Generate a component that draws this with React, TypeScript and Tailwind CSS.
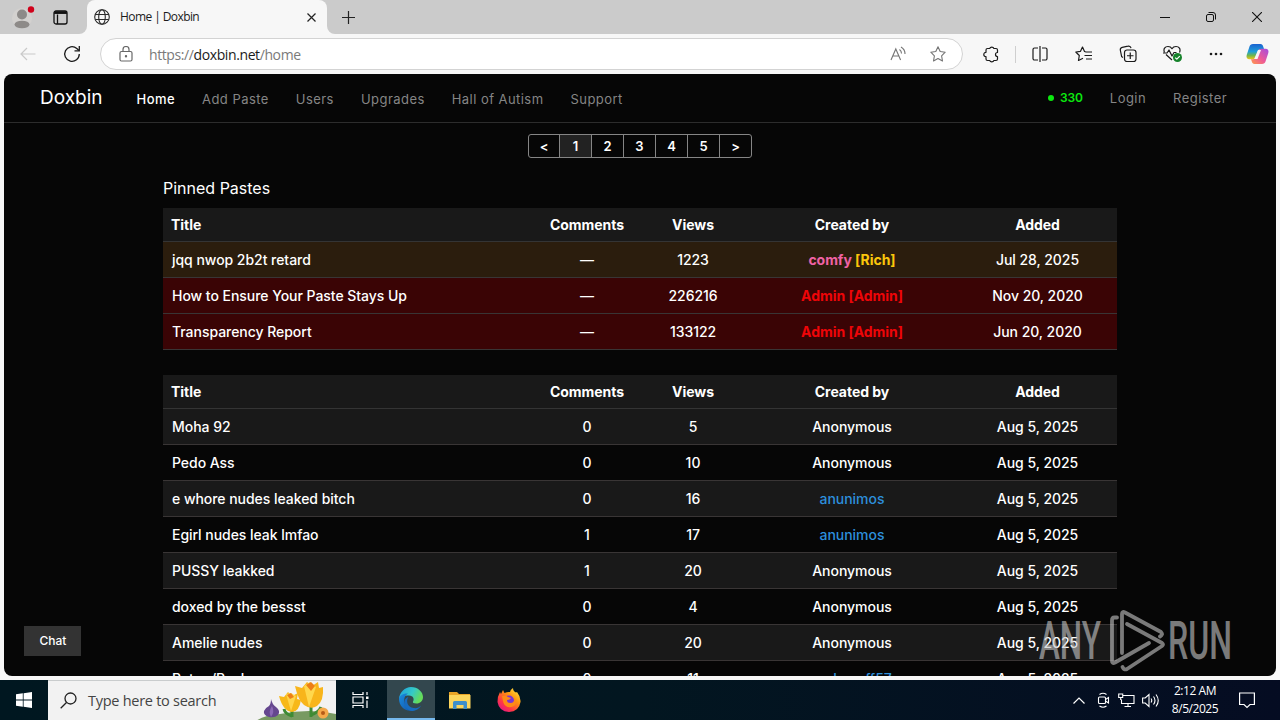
import { ReactNode } from 'react';

interface Paste {
    title: string;
    comments: string;
    views: string;
    author: ReactNode;
    added: string;
    tone: string;
}

const DARK = 'bg-[#060606]';
const LIGHT = 'bg-[#191919]';

const Admin = () => <b className="font-bold text-[#ee0508]">Admin [Admin]</b>;
const Member = ({ name }: { name: string }) => <span className="text-[#2d8fdc]">{name}</span>;

const PINNED: Paste[] = [
    {
        title: 'jqq nwop 2b2t retard',
        comments: '—',
        views: '1223',
        author: (
            <b className="font-bold">
                <span className="text-[#f062a4]">comfy</span> <span className="text-[#fbc60b]">[Rich]</span>
            </b>
        ),
        added: 'Jul 28, 2025',
        tone: 'bg-[#2b1d0d]',
    },
    { title: 'How to Ensure Your Paste Stays Up', comments: '—', views: '226216', author: <Admin />, added: 'Nov 20, 2020', tone: 'bg-[#3a0405]' },
    { title: 'Transparency Report', comments: '—', views: '133122', author: <Admin />, added: 'Jun 20, 2020', tone: 'bg-[#3a0405]' },
];

const PASTES: Paste[] = [
    { title: 'Moha 92', comments: '0', views: '5', author: 'Anonymous', added: 'Aug 5, 2025', tone: LIGHT },
    { title: 'Pedo Ass', comments: '0', views: '10', author: 'Anonymous', added: 'Aug 5, 2025', tone: DARK },
    { title: 'e whore nudes leaked bitch', comments: '0', views: '16', author: <Member name="anunimos" />, added: 'Aug 5, 2025', tone: LIGHT },
    { title: 'Egirl nudes leak lmfao', comments: '1', views: '17', author: <Member name="anunimos" />, added: 'Aug 5, 2025', tone: DARK },
    { title: 'PUSSY leakked', comments: '1', views: '20', author: 'Anonymous', added: 'Aug 5, 2025', tone: LIGHT },
    { title: 'doxed by the bessst', comments: '0', views: '4', author: 'Anonymous', added: 'Aug 5, 2025', tone: DARK },
    { title: 'Amelie nudes', comments: '0', views: '20', author: 'Anonymous', added: 'Aug 5, 2025', tone: LIGHT },
    { title: 'Peter /Pack', comments: '0', views: '11', author: <Member name="sarkseoff57" />, added: 'Aug 5, 2025', tone: DARK },
];

const NAV = ['Add Paste', 'Users', 'Upgrades', 'Hall of Autism', 'Support'];
const PAGES = ['<', '1', '2', '3', '4', '5', '>'];

function PasteTable({ rows }: { rows: Paste[] }) {
    return (
        <table className="w-[954px] table-fixed border-separate border-spacing-0 text-center text-[14px] font-medium tracking-[-0.040px] text-white">
            <colgroup>
                <col className="w-[371px]" />
                <col className="w-[106px]" />
                <col className="w-[106px]" />
                <col className="w-[212px]" />
                <col className="w-[159px]" />
            </colgroup>
            <thead>
                <tr className="h-[34px] bg-[#191919] font-bold *:border-b *:border-[#343434]">
                    <th className="px-2 text-left">Title</th>
                    <th>Comments</th>
                    <th>Views</th>
                    <th>Created by</th>
                    <th>Added</th>
                </tr>
            </thead>
            <tbody>
                {rows.map((row) => (
                    <tr key={row.title} className={`h-9 *:border-b *:border-[#393535] ${row.tone}`}>
                        <td className="pl-[9px] text-left">{row.title}</td>
                        <td>{row.comments}</td>
                        <td>{row.views}</td>
                        <td>{row.author}</td>
                        <td>{row.added}</td>
                    </tr>
                ))}
            </tbody>
        </table>
    );
}

function TabBar() {
    return (
        <div className="flex h-[34px] bg-[#f7f7f7]">
            <div className="flex w-[87px] items-center rounded-br-lg bg-[#cbcbcb] pl-3">
                <svg width="24" height="26" viewBox="0 0 24 26">
                    <circle cx="10" cy="14" r="10" fill="#d3d1cf" />
                    <circle cx="10" cy="10.500" r="5" fill="#8d8a88" />
                    <ellipse cx="10" cy="20.500" rx="7.500" ry="3.800" fill="#8d8a88" />
                    <circle cx="19" cy="5.500" r="3.200" fill="#d0021b" />
                </svg>
                <svg className="ml-[17px]" width="15" height="15" viewBox="0 0 15 15" fill="none" stroke="#111" strokeWidth="1.300">
                    <rect x="1" y="1" width="13" height="13" rx="2" />
                    <path d="M1 3.200h13M4.500 4.500V14" />
                    <path d="M1.500 2.500h12" strokeWidth="2.500" />
                </svg>
            </div>
            <div className="w-[240px] bg-[#cbcbcb]">
                <div className="flex h-full items-center rounded-t-lg bg-[#f7f7f7] pl-[7px]">
                    <svg width="16" height="16" viewBox="0 0 16 16" fill="none" stroke="#2b2b2b" strokeWidth="1.100">
                        <circle cx="8" cy="8" r="7.300" />
                        <ellipse cx="8" cy="8" rx="3.300" ry="7.300" />
                        <path d="M1.300 5.500h13.400M1.300 10.500h13.400" />
                    </svg>
                    <span className="ml-[10px] w-[187px] text-[12px] tracking-[-0.580px] text-[#1b1b1b]">Home | Doxbin</span>
                    <svg width="9" height="9" viewBox="0 0 9 9" stroke="#222" strokeWidth="1.200">
                        <path d="M.5.5l8 8M8.500.5l-8 8" />
                    </svg>
                </div>
            </div>
            <div className="flex flex-1 items-center justify-between rounded-bl-lg bg-[#cbcbcb] pr-[18px] pl-[14px]">
                <svg width="15" height="15" viewBox="0 0 15 15" stroke="#222" strokeWidth="1.200">
                    <path d="M7.500 1v13M1 7.500h13" />
                </svg>
                <div className="flex items-center gap-[36px]">
                    <svg width="10" height="10" viewBox="0 0 10 10" stroke="#111">
                        <path d="M0 5.500h10" />
                    </svg>
                    <svg width="10" height="10" viewBox="0 0 10 10" fill="none" stroke="#111">
                        <rect x=".5" y="2.500" width="7" height="7" rx="1.500" />
                        <path d="M2.500.5H7a2.500 2.500 0 0 1 2.500 2.500v4.500" />
                    </svg>
                    <svg width="10" height="10" viewBox="0 0 10 10" stroke="#111" strokeWidth="1.100">
                        <path d="M0 0l10 10M10 0L0 10" />
                    </svg>
                </div>
            </div>
        </div>
    );
}

function Toolbar() {
    return (
        <div className="flex h-10 items-center bg-[#f7f7f7] text-[#222]">
            <svg className="ml-5" width="16" height="14" viewBox="0 0 16 14" fill="none" stroke="#c9c9c9" strokeWidth="1.200">
                <path d="M15.500 7H1M7 1L1 7l6 6" />
            </svg>
            <svg className="ml-[27px]" width="18" height="18" viewBox="0 0 18 18" fill="none" stroke="#1b1b1b" strokeWidth="1.300">
                <path d="M16.300 9A7.300 7.300 0 1 1 13.800 3.500L16 5.500" />
                <path d="M16.300 1v4.800h-4.800" />
            </svg>
            <div className="ml-[19px] flex h-8 w-[863px] items-center rounded-full border border-[#d3d3d3] bg-white">
                <svg className="ml-[18px]" width="14" height="16" viewBox="0 0 14 16" fill="none" stroke="#686868" strokeWidth="1.200">
                    <rect x="1" y="5.500" width="12" height="9.500" rx="1.500" />
                    <path d="M4 5.500V3.500a3 3 0 0 1 6 0v2" />
                    <circle cx="7" cy="10.200" r=".6" fill="#686868" />
                </svg>
                <span className="ml-4 flex-1 text-[14px] tracking-[-0.400px] text-[#7a7a7a]">
                    https://<span className="text-[#1b1b1b]">doxbin.net</span>/home
                </span>
                <svg className="mr-[23px]" width="17" height="16" viewBox="0 0 17 16" fill="none" stroke="#757575" strokeWidth="1.100">
                    <path d="M1 14L5.800 3l4.800 11M2.700 10h6.200" />
                    <path d="M9.500 3.500a5 5 0 0 1 2 4M11 1a8 8 0 0 1 4 7" />
                </svg>
                <svg className="mr-4" width="16" height="16" viewBox="0 0 16 16" fill="none" stroke="#757575" strokeWidth="1.100" strokeLinejoin="round">
                    <path d="M8 .8l2.200 4.700 5 .7-3.600 3.600.9 5.200L8 12.500 3.500 15l.9-5.200L.8 6.200l5-.7z" />
                </svg>
            </div>
            <svg className="ml-5" width="17" height="17" viewBox="0 0 17 17" fill="none" stroke="#1b1b1b" strokeWidth="1.200" strokeLinejoin="round">
                <path d="M4.500 2.500h2.200a2.200 2 0 0 1 4.200 0H13q1.500 0 1.500 1.500v2.500a2 2 0 1 0 0 4V13q0 1.500-1.500 1.500h-2.100a2.200 2 0 0 1-4.200 0H4.500Q3 14.500 3 13v-2.300a2.200 2.200 0 0 1 0-4.400V4q0-1.500 1.500-1.500z" />
            </svg>
            <div className="ml-[15px] h-[17px] w-px bg-[#cfcfcf]" />
            <svg className="ml-4" width="16" height="16" viewBox="0 0 16 16" fill="none" stroke="#1b1b1b" strokeWidth="1.200">
                <path d="M6 2H2.500A1.500 1.500 0 0 0 1 3.500v9A1.500 1.500 0 0 0 2.500 14H6M10 2h3.500A1.500 1.500 0 0 1 15 3.500v9a1.500 1.500 0 0 1-1.500 1.500H10M8 0v16" />
            </svg>
            <svg className="ml-[27px]" width="18" height="16" viewBox="0 0 18 16" fill="none" stroke="#1b1b1b" strokeWidth="1.200" strokeLinejoin="round">
                <path d="M11 6L9.500 5.500 7.500 1 5.500 5.300.8 6l3.500 3.500-.8 5 4.500-2.300M10.500 6h6.500M9.500 9.500H17M11 13h6" />
            </svg>
            <svg className="ml-[26px]" width="18" height="18" viewBox="0 0 18 18" fill="none" stroke="#1b1b1b" strokeWidth="1.200">
                <path d="M4 12.500A2.500 2.500 0 0 1 2.300 10L1.300 5A2.500 2.500 0 0 1 3.200 2.300L9 1.200a2.500 2.500 0 0 1 3 2" />
                <rect x="5.500" y="5" width="11.500" height="11.500" rx="2.500" />
                <path d="M11.250 7.500V14M8 10.750h6.500" />
            </svg>
            <svg className="ml-[26px]" width="20" height="18" viewBox="0 0 20 18" fill="none" stroke="#1b1b1b" strokeWidth="1.200" strokeLinejoin="round">
                <path d="M9 15L3 9.500M1.500 7.500C0 4 2 1.500 5 1.500c2 0 3.300 1 4 2.200.7-1.200 2-2.200 4-2.200 3 0 5 2.500 3.500 6" />
                <path d="M0 8h4l2-3 3 6 2-3.500h2.500" />
                <circle cx="14.500" cy="12.500" r="4.500" fill="#16832b" stroke="none" />
                <path d="M12.200 12.600l1.600 1.600 3-3" stroke="#fff" />
            </svg>
            <svg className="ml-[26px]" width="14" height="4" viewBox="0 0 14 4" fill="#1b1b1b">
                <circle cx="2" cy="2" r="1.300" />
                <circle cx="7" cy="2" r="1.300" />
                <circle cx="12" cy="2" r="1.300" />
            </svg>
            <svg className="ml-[23px]" width="23" height="22" viewBox="0 0 23 22">
                <defs>
                    <linearGradient id="copilotA" x1="0" y1="0" x2="0" y2="1">
                        <stop offset="0" stopColor="#1b62d1" />
                        <stop offset=".5" stopColor="#1f9fd8" />
                        <stop offset=".75" stopColor="#70b64c" />
                        <stop offset="1" stopColor="#f1c51a" />
                    </linearGradient>
                    <linearGradient id="copilotB" x1="1" y1="0" x2="0" y2="1">
                        <stop offset="0" stopColor="#a34be0" />
                        <stop offset=".55" stopColor="#ee5a96" />
                        <stop offset="1" stopColor="#ff9c4a" />
                    </linearGradient>
                </defs>
                <path d="M7 1h7.500c1.500 0 2.300 1 2.700 2.500L18 6h-3c-2 0-3 1-3.500 3L9.700 14c-.6 1.700-1.300 2.300-3 2.300H3.500C1 16.300 0 14.500.7 12L3.500 3.500C4 2 5 1 7 1z" fill="url(#copilotA)" />
                <path d="M16 21H8.500c-1.500 0-2.300-1-2.700-2.500L5 16.200h2c2 0 3-1 3.500-3L12.300 8c.6-1.500 1.500-2.300 3-2.300h4.200c2.500 0 3.500 1.800 2.800 4.300l-2.800 8.500C19 20 18 21 16 21z" fill="url(#copilotB)" />
                <path d="M12 7h3l-3.500 9H8.200z" fill="#f8f3f7" />
            </svg>
        </div>
    );
}

function SiteHeader() {
    return (
        <header className="flex h-[49px] items-center border-b border-[#2c2c2c] pt-[2px] pr-[49px] pl-9 text-[13px] tracking-[0.450px] text-[#858585]">
            <span className="mr-[34px] pb-[2px] text-[19px] tracking-normal text-white">Doxbin</span>
            <span className="mr-[27px] pt-[2px] font-medium text-white">Home</span>
            <nav className="flex flex-1 gap-[27px] pt-[2px]">
                {NAV.map((item) => (
                    <span key={item}>{item}</span>
                ))}
            </nav>
            <span className="mr-[6px] mb-[2px] size-[6px] rounded-full bg-[#0be80f]" />
            <span className="mr-[27px] pb-[2px] text-[12px] font-semibold tracking-[-0.100px] text-[#0be80f]">330</span>
            <span className="mr-[27px]">Login</span>
            <span>Register</span>
        </header>
    );
}

function Watermark() {
    return (
        <svg className="absolute top-[534px] left-[1034px]" width="196" height="66" viewBox="0 0 196 66" opacity="0.600">
            <g fill="#c8c8c8" fontFamily="Roboto, sans-serif" fontSize="53" fontWeight="500">
                <text x="1" y="51" textLength="62" lengthAdjust="spacingAndGlyphs">ANY</text>
                <text x="130" y="51" textLength="64" lengthAdjust="spacingAndGlyphs">RUN</text>
            </g>
            <g fill="none" stroke="#c8c8c8" strokeWidth="3.800" strokeLinejoin="round" strokeLinecap="round">
                <path d="M79 9.500h-2.500q-2.500 0-2.500 3V53q0 3 3 1.500L111 35" />
                <path d="M84 45V6q0-3 3-1.500L123 24q2.500 2.500-1 4.500" />
                <path d="M89 16l35 19q2 1.500 0 3L89 61q-3 1.500-4.500-2" />
            </g>
        </svg>
    );
}

function Page() {
    return (
        <main className="relative mx-1 h-[602px] overflow-hidden rounded-lg bg-[#060606] font-[Inter,sans-serif] text-white">
            <SiteHeader />
            <div className="flex flex-col items-center">
                <div className="mt-[11px] flex h-6 divide-x divide-[#858585] overflow-hidden rounded-[3px] border border-[#858585] text-[13px] font-semibold">
                    {PAGES.map((page) => (
                        <span key={page} className={`flex w-8 items-center justify-center pt-px first:w-[31px] last:w-[31px] ${page === '1' ? 'bg-[#222222]' : ''}`}>
                            {page}
                        </span>
                    ))}
                </div>
                <h2 className="mt-[18px] mb-2 w-[954px] text-[16px] leading-6">Pinned Pastes</h2>
                <PasteTable rows={PINNED} />
                <div className="h-[25px]" />
                <PasteTable rows={PASTES} />
            </div>
            <button className="absolute bottom-5 left-5 h-[30px] w-[57px] bg-[#333333] pl-px text-[12px] font-medium">Chat</button>
            <Watermark />
        </main>
    );
}

function Flowers() {
    return (
        <svg width="80" height="40" viewBox="0 0 80 40">
            <path d="M0 40q8-6 24-7 30-6 56 0v7z" fill="#789a62" />
            <path d="M36 22v14M55 20v16M55 34q8-3 10-8M36 35q-7-2-8-7" stroke="#3f8b34" strokeWidth="3" fill="none" />
            <path d="M15 18q1 5 5 8 5 4 2 8-3 3-9 2-6-2-5-6 1-3 5-5 2-2 2-7z" fill="#65478f" />
            <path d="M16 25q-4 6-1 11 4-5 1-11z" fill="#8a68b5" />
            <path d="M23 15l5 1 4-5 4 4 6-3-1 6 4 1q-2 12-9 12-9-1-13-16z" fill="#f7b818" />
            <path d="M30 13l5 17 5-15-5-3z" fill="#ffd54a" />
            <path d="M39 5l7 2 5-6 5 4 6-4 1 6 4-1q1 14-6 19-6 4-13-1-6-5-9-19z" fill="#f8b51b" />
            <path d="M48 5l5 21 7-20-6-5z" fill="#ffd84d" />
            <path d="M50 4l5-3 4 4-4 5zM31 14l4-2 3 4-4 2z" fill="#ed7f16" />
            <circle cx="67" cy="32" r="5.500" fill="#f5a94a" />
            <circle cx="67" cy="32" r="2" fill="#b65b18" />
        </svg>
    );
}

function Taskbar() {
    return (
        <footer className="mt-1 flex h-10 items-center bg-gradient-to-r from-[#001720] via-[#021620] to-[#050c22] text-white">
            <svg className="mx-4" width="16" height="16" viewBox="0 0 16 16" fill="#fff">
                <path d="M0 2.300L6.800 1.300v6.300H0zM7.600 1.200L16 0v7.600H7.600zM0 8.400h6.800v6.300L0 13.700zM7.600 8.400H16V16l-8.400-1.200z" />
            </svg>
            <div className="flex h-10 w-[288px] items-center border-t border-[#c9cccd] bg-[#f2f2f2]">
                <svg className="ml-3" width="17" height="17" viewBox="0 0 17 17" fill="none" stroke="#222" strokeWidth="1.300">
                    <circle cx="10.500" cy="6.500" r="5.500" />
                    <path d="M6.500 10.500L.7 16.300" />
                </svg>
                <span className="ml-[11px] flex-1 text-[14.500px] tracking-[-0.270px] text-[#444]">Type here to search</span>
                <Flowers />
            </div>
            <div className="flex h-10 w-[51px] items-center justify-center">
                <svg className="mr-[3px]" width="17" height="16" viewBox="0 0 17 16" fill="none" stroke="#fff" strokeWidth="1.200">
                    <path d="M1 0v2.500h10V0M1 16v-2.500h10V16M1 5h10v6H1zM15 0v3M15 8.500V16" />
                    <rect x="14" y="4.500" width="2.500" height="2.500" fill="#fff" stroke="none" />
                </svg>
            </div>
            <div className="flex h-10 w-12 items-center justify-center border-b-2 border-[#76b9ed] bg-[#33474e]">
                <svg width="24" height="24" viewBox="0 0 24 24">
                    <defs>
                        <linearGradient id="edgeTop" x1="0" y1="0" x2="1" y2=".4">
                            <stop offset="0" stopColor="#1b9de2" />
                            <stop offset=".6" stopColor="#35c9c6" />
                            <stop offset="1" stopColor="#65dc5a" />
                        </linearGradient>
                        <linearGradient id="edgeBottom" x1="0" y1="0" x2="1" y2="1">
                            <stop offset="0" stopColor="#1a8be0" />
                            <stop offset="1" stopColor="#1257a8" />
                        </linearGradient>
                    </defs>
                    <path d="M0 12C.5 5 6 0 12 0c7 0 12 5 12 10 0 4-3 6.500-6.500 6.500-3 0-4-1-3.500-2 1.500-2 .5-6-4-6-5 0-9 1.500-10 3.500z" fill="url(#edgeTop)" />
                    <path d="M0 12c0-3 4-6 9-5.500-3 2-4.500 5-3.500 9 1 4 4 7 8 8C6 25 0 19 0 12z" fill="url(#edgeBottom)" />
                    <path d="M9.500 10c-3 4-1 10 5 11 3 .5 6-.5 7.500-2.500-2 4-6 5.500-9.500 5.500-5-1-8-6-7-10 .5-2 2-3.500 4-4z" fill="#176bbf" />
                </svg>
            </div>
            <svg className="ml-[14px]" width="22" height="18" viewBox="0 0 22 18">
                <path d="M0 1h8l2 2h11v14H0z" fill="#e9a426" />
                <path d="M0 4h21.500v13.500H0z" fill="#fcd55c" />
                <path d="M4 18v-6.500q0-1.500 1.500-1.500h11q1.500 0 1.500 1.500V18h-3.500v-4h-7v4z" fill="#3e8fcb" />
            </svg>
            <svg className="ml-[26px]" width="24" height="24" viewBox="0 0 24 24">
                <defs>
                    <linearGradient id="fox" x1="1" y1="0" x2=".2" y2="1">
                        <stop offset="0" stopColor="#fff44f" />
                        <stop offset=".4" stopColor="#ff980e" />
                        <stop offset=".75" stopColor="#ff3647" />
                        <stop offset="1" stopColor="#e31587" />
                    </linearGradient>
                </defs>
                <path d="M3 4l1 2 2-4 1.500 3q3-1.500 5.500-1Q13 2 16 0q0 3 3 4.500l1-.5q4 5 3.500 10-1.500 9.500-11.500 10Q2 23.500.5 14 .5 8 3 4z" fill="url(#fox)" />
                <circle cx="12" cy="12.500" r="5" fill="#7a35d4" />
                <path d="M5 8q4-1 6 1l3 1q-1 2-4 2 0 3 3.500 3 4 0 4-5 4 7-3 9-6 1-8-4-1-4-1.500-7z" fill="#ff8a16" />
            </svg>
            <div className="flex flex-1 items-center justify-end">
                <svg width="12" height="7" viewBox="0 0 12 7" fill="none" stroke="#fff" strokeWidth="1.200">
                    <path d="M.5 6.500L6 1l5.500 5.500" />
                </svg>
                <svg className="ml-3" width="13" height="16" viewBox="0 0 13 16" fill="none" stroke="#fff" strokeWidth="1.100">
                    <rect x="1.500" y="5" width="7" height="6.500" rx="1" />
                    <path d="M8.500 7.500l3-2v5.500l-3-2M2.500 2.500Q6 0 9.500 2.500M2.500 14Q6 16.500 9.500 14" />
                </svg>
                <svg className="ml-2" width="17" height="15" viewBox="0 0 17 15" fill="none" stroke="#fff" strokeWidth="1.100">
                    <path d="M5 2.500h11v8H3.500V6.500M10 10.500v3M6.500 13.500H13" />
                    <path d="M.7 1h4v3.500h-4zM2.700 4.500v2.500" />
                </svg>
                <svg className="ml-[7px]" width="18" height="15" viewBox="0 0 18 15" fill="none" stroke="#fff" strokeWidth="1.100">
                    <path d="M.6 5h2.600L7 1.500v12L3.200 10H.6z" />
                    <path d="M9 5.500q1.500 2 0 4M11.500 3.500q3 4 0 8M14 1.500q4.500 6 0 12" />
                </svg>
                <div className="ml-[11px] w-[48px] text-center text-[12px] leading-[18px] tracking-[-0.450px] whitespace-nowrap">
                    <div>2:12 AM</div>
                    <div>8/5/2025</div>
                </div>
                <svg className="mr-[25px] ml-5" width="16" height="17" viewBox="0 0 16 17" fill="none" stroke="#fff" strokeWidth="1.200">
                    <path d="M.6 1h14.800v11.500H11L8 15.500l-3-3H.6z" />
                </svg>
            </div>
        </footer>
    );
}

export default function App() {
    return (
        <div className="h-[720px] w-[1280px] overflow-hidden bg-[#f7f7f7] font-['Open_Sans','Noto_Sans',sans-serif]">
            <TabBar />
            <Toolbar />
            <Page />
            <Taskbar />
        </div>
    );
}
